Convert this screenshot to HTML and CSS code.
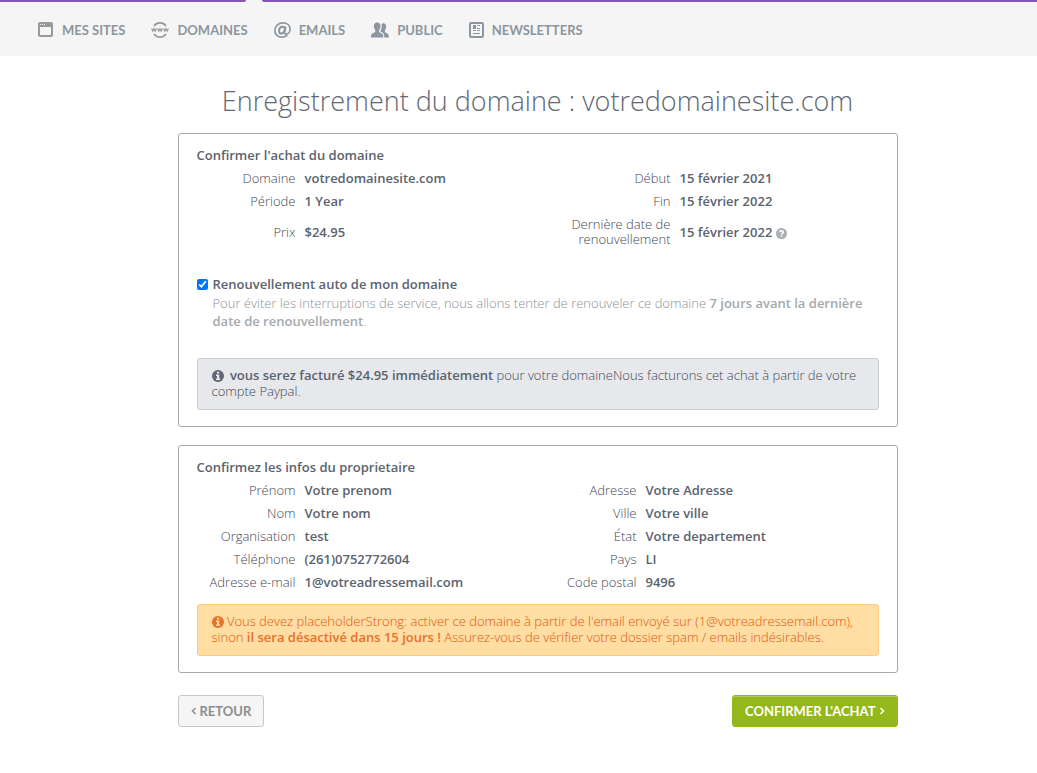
FILE: index.html
```html
<!DOCTYPE html>
<html lang="fr">
<head>
    <meta charset="UTF-8">
    <meta name="viewport" content="width=device-width, initial-scale=1.0">
    <title>Enregistrement du domaine</title>
    <link rel="stylesheet" href="styles.css">
</head>
<body>
    <header>
        <div class="tabs">
            <span class="tab-left"></span>
            <span class="tab-right"></span>
        </div>
        <nav class="menu">
            <a href="#sites">
                <svg width="16" height="16" viewBox="0 0 16 16"><path fill="#999" fill-rule="evenodd" d="M2 0h11a2 2 0 0 1 2 2v11a2 2 0 0 1-2 2H2a2 2 0 0 1-2-2V2a2 2 0 0 1 2-2zM2 5v7a1 1 0 0 0 1 1h9a1 1 0 0 0 1-1V5z"/><path fill="#f5f5f5" d="M2 2h1v1H2zM4 2h1v1H4zM6 2h1v1H6z"/></svg>
                Mes sites
            </a>
            <a href="#domaines">
                <svg width="18" height="16" viewBox="0 0 18 16" fill="none" stroke="#999"><path stroke-width="1.700" d="M3 4C4.500 1.800 6.500.9 9 .9s4.500.9 6 3.100M3 12c1.500 2.200 3.500 3.100 6 3.100s4.500-.9 6-3.100"/><path stroke-width="1.200" d="M.5 6.500l1.300 2.600L3 6.700l1.200 2.400 1.300-2.600M6.500 6.500l1.300 2.600L9 6.700l1.200 2.400 1.300-2.600M12.500 6.500l1.300 2.600L15 6.700l1.200 2.400 1.300-2.600"/></svg>
                Domaines
            </a>
            <a href="#emails">
                <svg width="17" height="16" viewBox="0 0 17 16" fill="none" stroke="#8d969e" stroke-linecap="round"><path stroke-width="1.700" d="M12.800 13.700C11.500 14.700 10 15.100 8.100 15.100 3.800 15.100.9 12.500.9 8.500.9 4.100 4.300.9 9 .9c4.200 0 7.100 2.500 7.100 6 0 3-1.900 5.200-4.200 5.200-1.300 0-1.700-.8-1.400-2.100l1-5"/><path stroke-width="2" d="M10.900 6.600C10.600 5.300 9.800 4.700 8.700 4.700 6.600 4.700 5.100 6.500 5.100 8.900c0 1.700.8 2.700 2.200 2.700 1.700 0 2.900-1.400 3.400-3.600"/></svg>
                Emails
            </a>
            <a href="#public">
                <svg width="18" height="16" viewBox="0 0 19 16" fill="#8d969e"><path d="M6.500 0C8.800 0 10 1.500 10 3.900c0 1.800-.6 3.300-1.500 4.300v1.600c0 1 3.900 1.500 4.300 3.700L13 16H0v-2.500c.4-2.200 4.500-2.700 4.500-3.700V8.200C3.600 7.200 3 5.700 3 3.900 3 1.500 4.200 0 6.500 0z"/><path d="M11 1.800c.5-.5 1.100-.8 1.900-.8 2 0 3.100 1.300 3.100 3.400 0 1.600-.5 2.900-1.300 3.800v1.600c0 1 3.500 1.600 3.900 3.700L19 16h-4.900c0-3.800-.8-4.900-4.200-6.400V8.700c.9-1.200 1.400-2.900 1.400-4.700 0-.8-.1-1.500-.3-2.200z"/></svg>
                Public
            </a>
            <a href="#newsletters">
                <svg width="15" height="16" viewBox="0 0 15 16" fill="none" stroke="#8d969e"><rect x="1" y="1" width="13" height="14" rx="1" stroke-width="2"/><path fill="#8d969e" stroke="none" d="M4 3h3v4H4z"/><path d="M8 3.500h3M8 6.500h3M4 8.500h3M8 8.500h3M4 11.500h7"/></svg>
                Newsletters
            </a>
        </nav>
    </header>

    <main>
        <h1>Enregistrement du domaine : votredomainesite.com</h1>

        <section class="card">
            <h2>Confirmer l'achat du domaine</h2>
            <table class="infos">
                <colgroup>
                    <col class="col-label">
                    <col>
                    <col class="col-label-right">
                    <col class="col-date">
                </colgroup>
                <tbody>
                    <tr>
                        <th scope="row">Domaine</th>
                        <td>votredomainesite.com</td>
                        <th scope="row">Début</th>
                        <td>15 février 2021</td>
                    </tr>
                    <tr>
                        <th scope="row">Période</th>
                        <td>1 Year</td>
                        <th scope="row">Fin</th>
                        <td>15 février 2022</td>
                    </tr>
                    <tr>
                        <th scope="row">Prix</th>
                        <td>$24.95</td>
                        <th scope="row">Dernière date de renouvellement</th>
                        <td>15 février 2022 <svg class="icon help" viewBox="0 0 12 12"><circle cx="6" cy="6" r="6" fill="#aaaeb3"/><path fill="none" stroke="#fff" stroke-width="1.700" d="M4 4.700C4 3.400 4.800 2.900 6 2.900s2 .6 2 1.600C8 5.700 6.100 5.700 6.100 7.200M6.100 8v1.600"/></svg></td>
                    </tr>
                </tbody>
            </table>

            <div class="renew">
                <input type="checkbox" id="auto-renew" checked>
                <label for="auto-renew">Renouvellement auto de mon domaine</label>
                <p>Pour éviter les interruptions de service, nous allons tenter de renouveler ce domaine <b>7 jours avant la dernière date de renouvellement</b>.</p>
            </div>

            <p class="alert alert-info"><svg class="icon wide" viewBox="0 0 12 12"><circle cx="6" cy="6" r="6" fill="#5f6873"/><path fill="#e7e8ec" d="M5 1.800h2.200v1.700H5zM4 4.500h3.200v4h1V10H4V8.500h1V6H4z"/></svg> <b>vous serez facturé $24.95 immédiatement</b> pour votre domaineNous facturons cet achat à partir de votre compte Paypal.</p>
        </section>

        <section class="card">
            <h2>Confirmez les infos du proprietaire</h2>
            <table class="infos">
                <colgroup>
                    <col class="col-label">
                    <col>
                    <col class="col-label-right">
                    <col class="col-address">
                </colgroup>
                <tbody>
                    <tr>
                        <th scope="row">Prénom</th>
                        <td>Votre prenom</td>
                        <th scope="row">Adresse</th>
                        <td>Votre Adresse</td>
                    </tr>
                    <tr>
                        <th scope="row">Nom</th>
                        <td>Votre nom</td>
                        <th scope="row">Ville</th>
                        <td>Votre ville</td>
                    </tr>
                    <tr>
                        <th scope="row">Organisation</th>
                        <td>test</td>
                        <th scope="row">État</th>
                        <td>Votre departement</td>
                    </tr>
                    <tr>
                        <th scope="row">Téléphone</th>
                        <td>(261)0752772604</td>
                        <th scope="row">Pays</th>
                        <td>LI</td>
                    </tr>
                    <tr>
                        <th scope="row">Adresse e-mail</th>
                        <td>1@votreadressemail.com</td>
                        <th scope="row">Code postal</th>
                        <td>9496</td>
                    </tr>
                </tbody>
            </table>

            <p class="alert alert-warning"><svg class="icon" viewBox="0 0 12 12"><circle cx="6" cy="6" r="6" fill="#e8702a"/><path fill="#ffdda3" d="M5 1.800h2.200v1.700H5zM4 4.500h3.200v4h1V10H4V8.500h1V6H4z"/></svg> Vous devez placeholderStrong: activer ce domaine à partir de l'email envoyé sur (1@votreadressemail.com), sinon <b>il sera désactivé dans 15 jours !</b> Assurez-vous de vérifier votre dossier spam / emails indésirables.</p>
        </section>

        <div class="actions">
            <button type="button" class="btn"><svg width="6" height="8" viewBox="0 0 6 8"><path d="M4.500 1l-3 3 3 3"/></svg>Retour</button>
            <button type="button" class="btn btn-confirm">Confirmer l'achat<svg width="6" height="8" viewBox="0 0 6 8"><path d="M1.500 1l3 3-3 3"/></svg></button>
        </div>
    </main>
</body>
</html>
```
FILE: styles.css
```css
* {
    box-sizing: border-box;
}
body {
    margin: 0;
    background: #fff;
    color: #3f4853;
    font-family: "Open Sans", sans-serif;
    font-size: 13px;
    font-weight: 300;
}
h1, h2, p {
    margin: 0;
}
b {
    font-weight: 600;
}
header {
    background: #f5f5f5;
}
.tabs {
    display: flex;
    gap: 16px;
    height: 2px;
}
.tabs span {
    background: #8456b8;
}
.tab-left {
    width: 246px;
    border-bottom-right-radius: 2px;
}
.tab-right {
    flex: 1;
    border-bottom-left-radius: 2px;
}
.menu {
    display: flex;
    align-items: center;
    gap: 26px;
    height: 54px;
    padding: 2px 38px 0;
}
.menu a {
    display: flex;
    align-items: center;
    gap: 8px;
    color: #8d969e;
    font-family: Lato, sans-serif;
    font-size: 13px;
    font-weight: bold;
    text-decoration: none;
    text-transform: uppercase;
}
main {
    padding-left: 38px;
}
h1 {
    padding: 26px 0 13px;
    color: #5f6873;
    font-size: 27px;
    font-weight: 300;
    line-height: 38px;
    text-align: center;
}
.card, .actions {
    max-width: 720px;
    margin: 0 auto 18px;
}
.card {
    padding: 9px 18px 16px;
    border: 1px solid #a5a8ad;
    border-radius: 3px;
}
h2 {
    color: #5a636e;
    font-size: 13px;
    font-weight: 600;
    line-height: 24px;
}
.infos {
    width: 100%;
    table-layout: fixed;
    border-collapse: collapse;
    line-height: 15px;
}
.infos th {
    padding: 4px 0;
    font-weight: 300;
    text-align: right;
}
.infos td {
    padding: 4px 0 4px 9px;
    color: #5a636e;
    font-weight: 600;
}
.col-label {
    width: 99px;
}
.col-label-right {
    width: 110px;
}
.col-date {
    width: 208px;
}
.col-address {
    width: 242px;
}
.icon {
    width: 12px;
    height: 12px;
    vertical-align: -2px;
}
.wide {
    margin-right: 3px;
}
.help {
    width: 11px;
    height: 11px;
}
.renew {
    display: grid;
    grid-template-columns: 11px 1fr;
    column-gap: 5px;
    align-items: center;
    margin: 23px 0 28px;
}
.renew input {
    width: 11px;
    height: 11px;
    margin: 0;
}
.renew label {
    color: #5a636e;
    font-weight: 600;
    line-height: 20px;
}
.renew p {
    grid-column: 2;
    color: #8c9197;
    line-height: 18px;
}
.renew b {
    color: #a5a9ae;
}
.alert {
    padding: 8px 14px 10px;
    border: 1px solid;
    border-radius: 3px;
    line-height: 16px;
}
.alert-info {
    border-color: #cbccd2;
    background: #e7e8ec;
}
.alert-info b {
    color: #5a636e;
}
.alert-warning {
    margin-top: 10px;
    border-color: #ffc87f;
    background: #ffdda3;
    color: #e0560c;
}
.alert-warning b {
    color: #e8702a;
}
.actions {
    display: flex;
    justify-content: space-between;
    padding: 4px 0 28px;
}
.btn {
    display: flex;
    align-items: center;
    gap: 3px;
    height: 32px;
    padding: 0 12px;
    border: 1px solid #c8c8c8;
    border-radius: 3px;
    background: #f5f5f5;
    color: #8d8d8d;
    font-family: Lato, sans-serif;
    font-size: 13px;
    font-weight: bold;
    text-transform: uppercase;
}
.btn svg {
    fill: none;
    stroke: currentColor;
    stroke-width: 1.5;
}
.btn-confirm {
    border-color: #94b81a;
    background: #94b81a;
    box-shadow: inset 0 1px #afc956;
    color: #fff;
}
```
